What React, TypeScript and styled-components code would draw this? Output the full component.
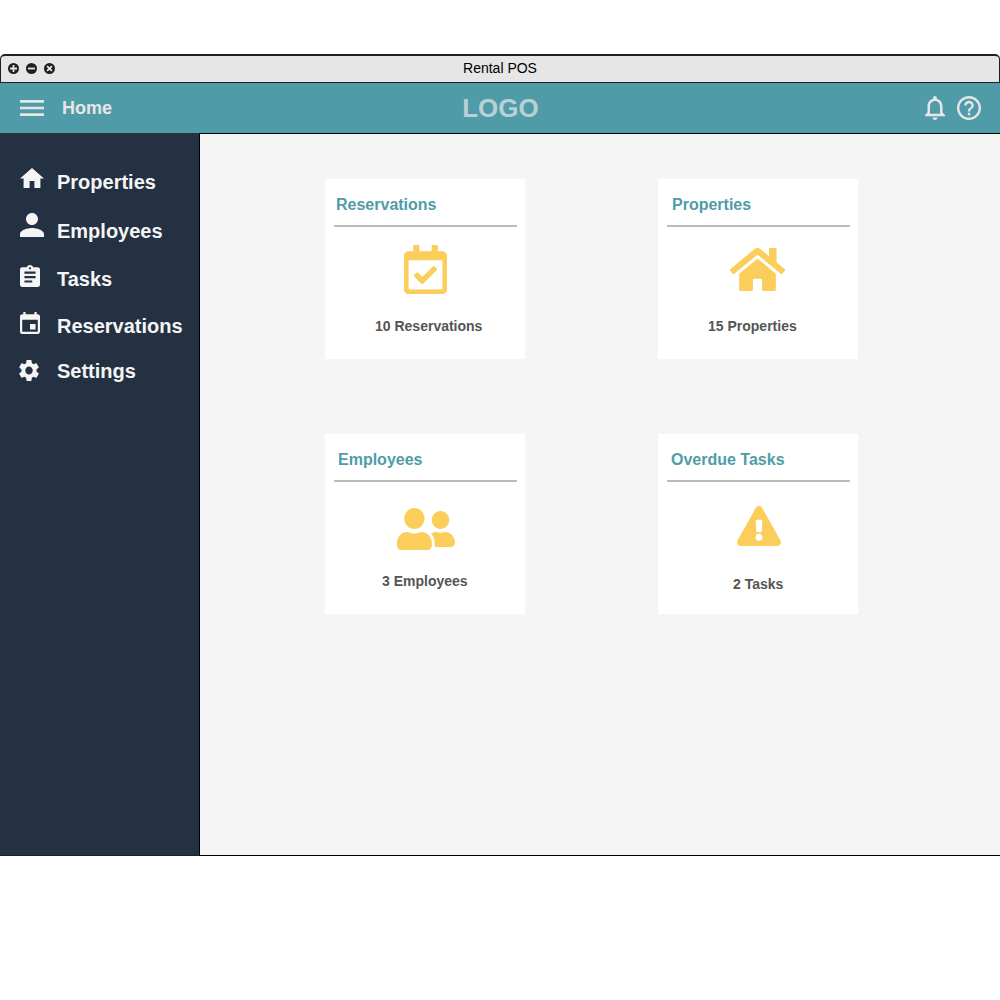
import React from 'react';
import styled, { createGlobalStyle } from 'styled-components';
import type { IconType } from 'react-icons';
import {
  MdMenu, MdHome, MdPerson, MdAssignment, MdEvent, MdSettings,
  MdNotificationsNone, MdHelpOutline,
} from 'react-icons/md';
import { FaRegCalendarCheck, FaHome, FaUserFriends, FaExclamationTriangle } from 'react-icons/fa';

const GlobalStyle = createGlobalStyle`
  * { box-sizing: border-box; }
  body {
    margin: 0;
    background: #ffffff;
    font-family: "Liberation Sans", Arial, sans-serif;
  }
  svg { display: block; flex: none; }
`;

const Window = styled.div`
  width: 1000px;
  height: 802px;
  margin-top: 54px;
  display: flex;
  flex-direction: column;
`;

const TitleBar = styled.div`
  height: 29px;
  display: grid;
  grid-template-columns: 1fr auto 1fr;
  align-items: center;
  padding: 0 7px 2px;
  background: #e6e6e6;
  border: 1px solid #231f20;
  border-top-width: 2px;
  border-radius: 5px 5px 0 0;
`;

const Controls = styled.div`
  display: flex;
  gap: 7px;
  padding-top: 1px;
`;

const WindowTitle = styled.div`
  font-size: 14px;
  line-height: 16px;
  color: #000000;
`;

const Header = styled.header`
  height: 50px;
  display: grid;
  grid-template-columns: 1fr auto 1fr;
  align-items: center;
  padding: 0 19px 0 20px;
  background: #4f9ca8;
  color: #e6e6e6;
`;

const HeaderLeft = styled.div`
  display: flex;
  align-items: center;
  gap: 18px;
`;

const PageName = styled.div`
  font-size: 18px;
  line-height: 20px;
  font-weight: bold;
`;

const Logo = styled.div`
  font-size: 26px;
  line-height: 30px;
  font-weight: bold;
  color: #b9d1d5;
`;

const HeaderRight = styled.div`
  display: flex;
  justify-content: flex-end;
  gap: 12px;
`;

const Body = styled.div`
  flex: 1;
  display: flex;
`;

const Sidebar = styled.nav`
  width: 200px;
  padding-top: 24px;
  background: #243142;
  border-right: 1px solid #000000;
  border-bottom: 1px solid #231f20;
`;

const NavItem = styled.a<{ $height: number }>`
  height: ${(p) => p.$height}px;
  display: flex;
  color: #f5f5f5;
`;

const NavIcon = styled.span<{ $left: number; $top: number }>`
  width: 57px;
  padding-left: ${(p) => p.$left}px;
  padding-top: ${(p) => p.$top}px;
`;

const NavLabel = styled.span`
  padding-top: 13px;
  font-size: 20px;
  line-height: 24px;
  font-weight: bold;
`;

const Main = styled.main`
  flex: 1;
  display: grid;
  grid-template-columns: 200px 200px;
  grid-template-rows: 180px 180px;
  gap: 75px 133px;
  padding: 45px 0 0 125px;
  background: #f5f5f5;
  border-top: 1px solid #000000;
  border-bottom: 1px solid #000000;
`;

const Card = styled.section`
  display: flex;
  flex-direction: column;
  background: #ffffff;
`;

const CardTitle = styled.h2<{ $indent: number }>`
  height: 31px;
  margin: 17px 8px 0 9px;
  padding-left: ${(p) => p.$indent}px;
  border-bottom: 2px solid #b8bcc0;
  font-size: 16px;
  line-height: 18px;
  color: #4f9ca8;
`;

const CardIcon = styled.div<{ $left: number; $top: number }>`
  height: 90px;
  padding-left: ${(p) => p.$left}px;
  padding-top: ${(p) => p.$top}px;
  color: #fbce5b;
`;

const CardCount = styled.div<{ $left: number; $drop: number }>`
  padding-left: ${(p) => p.$left}px;
  padding-top: ${(p) => p.$drop}px;
  font-size: 14px;
  line-height: 18px;
  font-weight: bold;
  color: #555555;
`;

type GlyphProps = { icon: IconType; box: string; w: number; h: number };

/* Crops an icon to its drawn bounds so it can be sized without built-in padding. */
const Glyph = ({ icon: Icon, box, w, h }: GlyphProps) => (
  <Icon viewBox={box} width={w} height={h} preserveAspectRatio="none" style={{ width: w, height: h }} />
);

const ControlButton = ({ mark }: { mark: string }) => (
  <svg width="11" height="11" viewBox="0 0 11 11">
    <circle cx="5.5" cy="5.5" r="5.5" fill="#231f20" />
    <path d={mark} stroke="#e6e6e6" strokeWidth="1.8" fill="none" />
  </svg>
);

const controls = ['M5.5 2v7M2 5.5h7', 'M2 5.5h7', 'M3.1 3.1l4.8 4.8M7.9 3.1l-4.8 4.8'];

const nav = [
  { label: 'Properties', height: 49, left: 20, top: 11, icon: MdHome, box: '2 3 20 17', w: 24, h: 20 },
  { label: 'Employees', height: 48, left: 20, top: 7, icon: MdPerson, box: '4 4 16 16', w: 24, h: 24 },
  { label: 'Tasks', height: 47, left: 20, top: 11, icon: MdAssignment, box: '3 1 18 20', w: 20, h: 22 },
  { label: 'Reservations', height: 45, left: 20, top: 11, icon: MdEvent, box: '3 1 18 20', w: 20, h: 22 },
  { label: 'Settings', height: 45, left: 19, top: 14, icon: MdSettings, box: '2.4 2.4 19.2 19.2', w: 20, h: 21 },
];

const cards = [
  { title: 'Reservations', indent: 2, count: '10 Reservations', countLeft: 50, drop: 0, left: 79, top: 18, icon: FaRegCalendarCheck, box: '0 0 448 512', w: 43, h: 49 },
  { title: 'Properties', indent: 5, count: '15 Properties', countLeft: 50, drop: 0, left: 72, top: 21, icon: FaHome, box: '0 32 576 448', w: 55, h: 43 },
  { title: 'Employees', indent: 4, count: '3 Employees', countLeft: 57, drop: 0, left: 72, top: 26, icon: FaUserFriends, box: '0 32 640 448', w: 58, h: 42 },
  { title: 'Overdue Tasks', indent: 4, count: '2 Tasks', countLeft: 75, drop: 3, left: 79, top: 24, icon: FaExclamationTriangle, box: '0 0 576 512', w: 44, h: 40 },
];

export default function App() {
  return (
    <>
      <GlobalStyle />
      <Window>
        <TitleBar>
          <Controls>
            {controls.map((mark) => <ControlButton key={mark} mark={mark} />)}
          </Controls>
          <WindowTitle>Rental POS</WindowTitle>
        </TitleBar>
        <Header>
          <HeaderLeft>
            <Glyph icon={MdMenu} box="3 6 18 12" w={24} h={16} />
            <PageName>Home</PageName>
          </HeaderLeft>
          <Logo>LOGO</Logo>
          <HeaderRight>
            <Glyph icon={MdNotificationsNone} box="4 2.5 16 19.5" w={20} h={24} />
            <Glyph icon={MdHelpOutline} box="2 2 20 20" w={24} h={24} />
          </HeaderRight>
        </Header>
        <Body>
          <Sidebar>
            {nav.map((n) => (
              <NavItem key={n.label} $height={n.height}>
                <NavIcon $left={n.left} $top={n.top}>
                  <Glyph icon={n.icon} box={n.box} w={n.w} h={n.h} />
                </NavIcon>
                <NavLabel>{n.label}</NavLabel>
              </NavItem>
            ))}
          </Sidebar>
          <Main>
            {cards.map((c) => (
              <Card key={c.title}>
                <CardTitle $indent={c.indent}>{c.title}</CardTitle>
                <CardIcon $left={c.left} $top={c.top}>
                  <Glyph icon={c.icon} box={c.box} w={c.w} h={c.h} />
                </CardIcon>
                <CardCount $left={c.countLeft} $drop={c.drop}>{c.count}</CardCount>
              </Card>
            ))}
          </Main>
        </Body>
      </Window>
    </>
  );
}
